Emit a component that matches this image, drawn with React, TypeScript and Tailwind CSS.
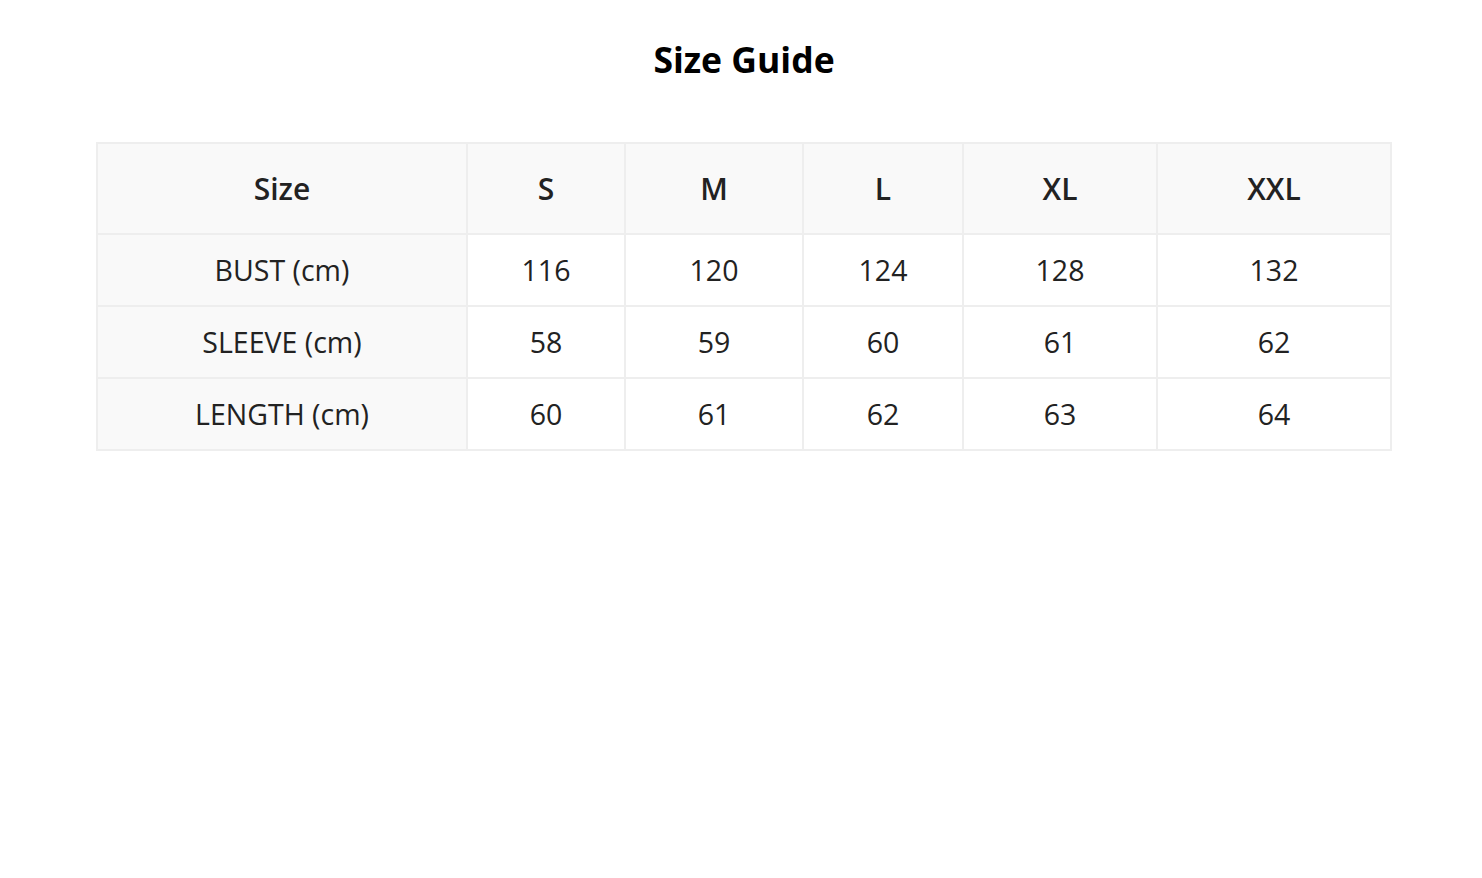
import React from "react";

const sizes = ["S", "M", "L", "XL", "XXL"];
const rows = [
  { label: "BUST (cm)", values: [116, 120, 124, 128, 132] },
  { label: "SLEEVE (cm)", values: [58, 59, 60, 61, 62] },
  { label: "LENGTH (cm)", values: [60, 61, 62, 63, 64] },
];
const widths = ["w-[370px]", "w-[158px]", "w-[178px]", "w-[160px]", "w-[194px]", "w-[234px]"];

const App = () => {
  return (
    <div className="min-h-screen bg-white font-['Open_Sans',sans-serif] text-[#222]">
      <h1 className="pl-[6px] pt-[36px] text-center text-[35.5px] font-bold leading-[46px] text-black">
        Size Guide
      </h1>
      <table className="ml-[96px] mt-[60px] w-[1294px] table-fixed border-collapse border-2 border-[#eeeeee]">
        <colgroup>
          {widths.map((w, i) => (
            <col key={i} className={w} />
          ))}
        </colgroup>
        <thead>
          <tr className="h-[91px] bg-[#f9f9f9]">
            <th className="border-2 border-[#eeeeee] text-[30px] font-semibold">Size</th>
            {sizes.map((s) => (
              <th key={s} className="border-2 border-[#eeeeee] text-[30px] font-semibold">
                {s}
              </th>
            ))}
          </tr>
        </thead>
        <tbody>
          {rows.map((r) => (
            <tr key={r.label} className="h-[72px]">
              <td className="border-2 border-[#eeeeee] bg-[#f9f9f9] text-center text-[28.5px]">
                {r.label}
              </td>
              {r.values.map((v, i) => (
                <td key={i} className="border-2 border-[#eeeeee] text-center text-[28.5px]">
                  {v}
                </td>
              ))}
            </tr>
          ))}
        </tbody>
      </table>
    </div>
  );
};

export default App;
